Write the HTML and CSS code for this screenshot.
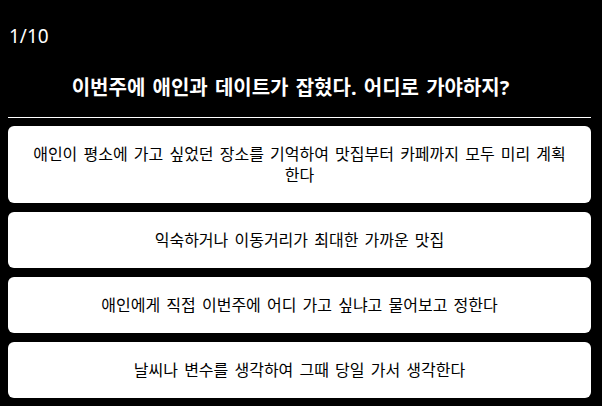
FILE: index.html
```html
<!DOCTYPE html>
<html lang="ko">
<head>
<meta charset="utf-8">
<title>연애 테스트</title>
<link rel="stylesheet" href="styles.css">
</head>
<body>
<main class="quiz">
  <div class="counter">1/10</div>
  <h2 class="question">이번주에 애인과 데이트가 잡혔다. 어디로 가야하지?</h2>
  <hr class="divider">
  <ul class="options">
    <li class="option">애인이 평소에 가고 싶었던 장소를 기억하여 맛집부터 카페까지 모두 미리 계획한다</li>
    <li class="option">익숙하거나 이동거리가 최대한 가까운 맛집</li>
    <li class="option">애인에게 직접 이번주에 어디 가고 싶냐고 물어보고 정한다</li>
    <li class="option">날씨나 변수를 생각하여 그때 당일 가서 생각한다</li>
  </ul>
</main>
</body>
</html>
```
FILE: styles.css
```css
html, body {
  margin: 0;
  background: #000;
  color: #fff;
  font-family: "Noto Sans", "Noto Sans CJK KR", sans-serif;
}

.quiz {
  padding: 22px 11px 8px 8px;
}

.counter {
  font-size: 19px;
  line-height: 28px;
  padding-left: 1px;
}

.question {
  margin: 24px 0 0;
  padding-right: 18px;
  font-size: 20px;
  line-height: 28px;
  font-weight: 700;
  word-spacing: 2px;
  text-align: center;
}

.divider {
  margin: 15px 0 8px;
  border: 0;
  border-top: 1px solid #fff;
}

.options {
  list-style: none;
  margin: 0;
  padding: 0;
  display: flex;
  flex-direction: column;
  gap: 9px;
}

.option {
  background: #fff;
  color: #000;
  border-radius: 6px;
  padding: 17.5px 24px;
  font-size: 16px;
  line-height: 21px;
  word-spacing: 2px;
  text-align: center;
}
```
